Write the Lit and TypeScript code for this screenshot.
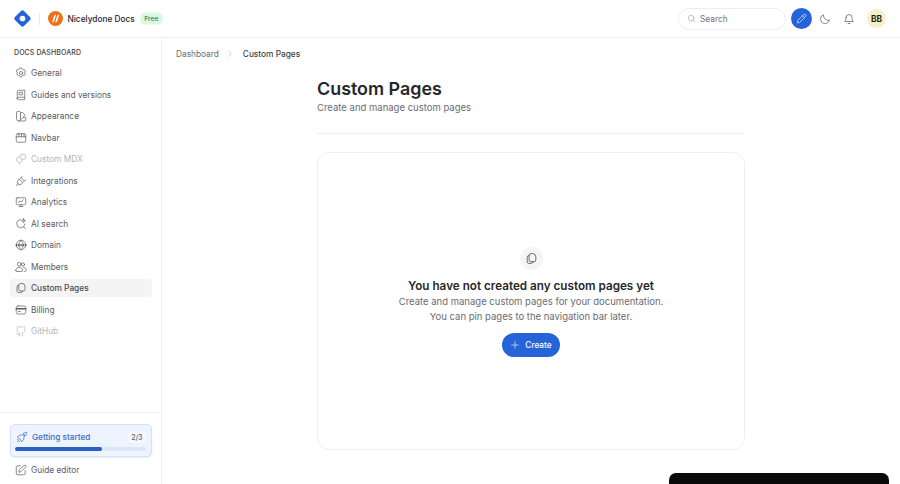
import { LitElement, html, css, svg } from "lit";
import { customElement } from "lit/decorators.js";

const ic = (body: unknown, cls = "ico") => html`<svg class=${cls} viewBox="0 0 24 24" fill="none" stroke="currentColor" stroke-width="1.6" stroke-linecap="round" stroke-linejoin="round">${body}</svg>`;

const icons: Record<string, unknown> = {
  gear: svg`<path d="M12 2l2 .5.8 2.300 1.600.9 2.400-.5 2 3-1.500 1.900v1.800l1.500 1.900-2 3-2.400-.5-1.600.9-.8 2.300-2 .5-2-.5-.8-2.300-1.600-.9-2.400.5-2-3 1.500-1.900v-1.800L2.200 8.200l2-3 2.400.5 1.600-.9.8-2.300z"/><circle cx="12" cy="12" r="3.200"/>`,
  book: svg`<path d="M4.500 19V5a2.500 2.500 0 0 1 2.500-2.500h12.500v19H7A2.500 2.500 0 0 1 4.500 19zm0 0A2.500 2.500 0 0 1 7 16.500h12.500"/><path d="M9 6.500h6v5H9z"/>`,
  palette: svg`<path d="M3 5a2 2 0 0 1 2-2h4a2 2 0 0 1 2 2v13a4 4 0 0 1-8 0z"/><path d="M11 7l3-3 6.500 6.500L11 20"/><path d="M8 22h12a1.500 1.500 0 0 0 1.500-1.500V16a1.500 1.500 0 0 0-1.500-1.500h-3"/>`,
  navbar: svg`<rect x="2.500" y="3.500" width="19" height="17" rx="3.500"/><path d="M2.500 9.500h19M8 3.500v6M13 3.500v6M18 3.500v6"/>`,
  mdx: svg`<rect x="11" y="2.500" width="10" height="10" rx="3"/><path d="M11 6L3.500 10v6l5.500 3.500 5.500-3.500v-3.500"/><path d="M9 19.500V22"/>`,
  plug: svg`<path d="M8.500 8.500l7 7-2.500 2.500a4.900 4.900 0 0 1-7-7z"/><path d="M6 18l-3.500 3.500M12.500 5.500l6 6"/><path d="M11 7l3-4M17 13l4-3"/>`,
  chart: svg`<rect x="2.500" y="3.500" width="19" height="14" rx="2.500"/><path d="M7 13l3-3 2 2 4.500-4.500M8.500 21h7M12 17.500V21"/>`,
  aisearch: svg`<path d="M11.500 3.500a8 8 0 1 0 8 8.500"/><path d="M16.500 17l4.500 4.500"/><path d="M17 1.500l1 2.900 2.900 1-2.900 1-1 2.900-1-2.900-2.900-1 2.900-1z"/>`,
  globe: svg`<circle cx="12" cy="12" r="9.500"/><path d="M12 2.500c-5.500 5-5.500 14 0 19 5.500-5 5.500-14 0-19z"/><path d="M1.500 12h21" stroke-width="4.500" stroke-dasharray="2.400 1.300" stroke-linecap="butt"/>`,
  users: svg`<circle cx="8.500" cy="6.500" r="3.800"/><circle cx="16" cy="7" r="3.200"/><path d="M1.500 19c0-3.500 3-6.500 7-6.500s7 3 7 6.500a2 2 0 0 1-2 2h-10a2 2 0 0 1-2-2z"/><path d="M17 12.500c3.200.1 5.500 3 5.500 6 0 1.500-1 2.500-3.500 2.500"/>`,
  pages: svg`<path d="M7.500 6.500A3.500 3.500 0 0 0 4 10v7.500A3.500 3.500 0 0 0 7.500 21h4a3.500 3.500 0 0 0 3.500-3"/><path d="M7.500 6.500A3.500 3.500 0 0 1 11 3h3a6 6 0 0 1 6 6v5.500a3.500 3.500 0 0 1-3.500 3.500H11a3.500 3.500 0 0 1-3.500-3.500z"/>`,
  card: svg`<rect x="2.500" y="4" width="19" height="16" rx="3.500"/><path d="M2.500 9.500h19" stroke-width="3"/><path d="M6.500 15h4"/>`,
  github: svg`<path d="M9 19.500c-4 1.300-4-2-6-2.500M15 22v-3.500a3 3 0 0 0-.9-2.400c3-.3 6-1.500 6-6.300a5 5 0 0 0-1.300-3.400 4.600 4.600 0 0 0-.1-3.400s-1.100-.3-3.600 1.300a12 12 0 0 0-6.200 0C6.400 2.700 5.300 3 5.300 3a4.600 4.600 0 0 0-.1 3.400A5 5 0 0 0 3.900 9.800c0 4.800 3 6 6 6.300a3 3 0 0 0-.9 2.400V22"/>`,
  rocket: svg`<path d="M6 14.500L3 12.500l3.500-4H11C14 4.500 17.500 2.500 21.500 2.500c0 4-2 7.500-6 10.500v4.500L11.500 21l-2-3"/><path d="M6 14.500l3.500 3.500"/><path d="M5.500 18.500l-3 3M3.500 16.500l-1 1M7.500 20.500l-1 1"/><circle cx="15.500" cy="8.500" r="1.500"/>`,
  edit: svg`<path d="M11 3.500H6A3.500 3.500 0 0 0 2.500 7v11A3.500 3.500 0 0 0 6 21.500h11a3.500 3.500 0 0 0 3.500-3.500v-5"/><path d="M18.500 2.500a2.300 2.300 0 0 1 3.200 3.200L12 15.500l-4.500 1 1-4.500z"/>`,
};

const nav: [string, string, boolean?, boolean?][] = [
  ["General", "gear"],
  ["Guides and versions", "book"],
  ["Appearance", "palette"],
  ["Navbar", "navbar"],
  ["Custom MDX", "mdx", true],
  ["Integrations", "plug"],
  ["Analytics", "chart"],
  ["AI search", "aisearch"],
  ["Domain", "globe"],
  ["Members", "users"],
  ["Custom Pages", "pages", false, true],
  ["Billing", "card"],
  ["GitHub", "github", true],
];

@customElement("app-root")
export class AppRoot extends LitElement {
  static styles = css`
    :host { display: block; height: 484px; overflow: hidden; position: relative; background: #fff; font-family: Inter, "Liberation Sans", sans-serif; color: #52525b; }
    .header { height: 38px; box-sizing: border-box; border-bottom: 1px solid #f0f0f1; display: flex; align-items: center; padding: 0 14px 0 14px; }
    .logo { width: 17px; height: 17px; display: block; }
    .sep { width: 1px; height: 12px; background: #e9e9eb; margin: 0 8px; }
    .brand { width: 15px; height: 15px; display: block; }
    .brand-name { font-size: 8.300px; font-weight: 500; color: #27272a; margin-left: 4.500px; }
    .free { font-size: 6.800px; font-weight: 500; color: #2f8f57; background: #dcf7e4; border: 1px solid #ecfaf0; border-radius: 5px; padding: 2px 3.500px; margin-left: 5px; line-height: 7px; }
    .spacer { flex: 1; }
    .search { width: 108px; height: 22px; box-sizing: border-box; border: 1px solid #efeff1; border-radius: 11px; display: flex; align-items: center; gap: 4px; padding-left: 8px; font-size: 8.300px; color: #71717a; }
    .search svg { width: 9px; height: 9px; color: #8b8b93; }
    .pen { width: 21px; height: 21px; border-radius: 50%; background: #2563d9; color: #fff; display: flex; align-items: center; justify-content: center; margin-left: 5px; }
    .pen svg { width: 11px; height: 11px; }
    .hbtn { width: 12px; height: 12px; color: #6b6b73; display: block; }
    .hbtn.moon { margin-left: 7px; }
    .hbtn.bell { margin-left: 12px; }
    .avatar { width: 19px; height: 19px; border-radius: 50%; background: #f5f1c7; color: #1c1c1f; font-size: 8.300px; font-weight: 700; display: flex; align-items: center; justify-content: center; margin-left: 12px; }
    .body { display: flex; height: 446px; }
    .side { width: 162px; box-sizing: border-box; border-right: 1px solid #f0f0f1; display: flex; flex-direction: column; flex-shrink: 0; overflow: hidden; }
    .side-top { flex: 1; padding: 10px 9.500px 0 10px; }
    .side-title { font-size: 7px; font-weight: 500; color: #3f3f46; padding-left: 4px; line-height: 10px; margin-bottom: 6px; letter-spacing: .1px; }
    .item { height: 18px; margin-bottom: 3.500px; display: flex; align-items: center; gap: 4px; padding-left: 5px; border-radius: 4px; font-size: 8.350px; color: #5b5b63; }
    .item.dis { color: #b4b4ba; }
    .item.on { background: #f4f4f5; color: #4a4a52; font-weight: 500; }
    .ico { width: 12px; height: 12px; flex-shrink: 0; stroke-width: 1.400; }
    .side-foot { border-top: 1px solid #f0f0f1; padding: 11px 9.500px 0 10px; height: 72px; box-sizing: border-box; flex-shrink: 0; }
    .gs { height: 33px; box-sizing: border-box; border: 1px solid #d4e0f3; border-radius: 5px; background: #eef4fd; box-shadow: 0 1px 2px rgba(30,60,120,.1); padding: 5.500px 5px 0 4px; }
    .gs-row { display: flex; align-items: center; gap: 4px; color: #3b6cc4; font-size: 8.200px; font-weight: 500; height: 13px; padding-left: 1px; }
    .gs-count { margin-left: auto; font-size: 7px; color: #52627c; background: #f6f8fc; border-radius: 3px; padding: 1px 3px; line-height: 9px; }
    .bar { height: 3.500px; background: #dbe7f8; border-radius: 2px; margin-top: 3.500px; }
    .fill { height: 100%; width: 67%; background: #2a5fc4; border-radius: 2px; }
    .foot-item { margin-top: 3.500px; margin-bottom: 0; height: 18px; }
    .main { flex: 1; min-width: 0; display: flex; flex-direction: column; }
    .crumbs { display: flex; align-items: center; padding: 9.500px 0 0 14px; font-size: 8.300px; height: 12px; color: #6b6b73; }
    .crumbs svg { width: 8px; height: 8px; color: #a1a1aa; margin: 0 9px 0 7px; }
    .crumbs b { font-weight: 500; color: #3f3f46; }
    .content { width: 428px; margin-left: 155px; }
    h1 { margin: 16.500px 0 0; font-size: 17.900px; line-height: 26px; font-weight: 600; color: #27272a; letter-spacing: 0; }
    .sub { font-size: 9.500px; line-height: 13px; color: #6b6b73; margin-top: -1px; }
    hr { border: 0; border-top: 1px solid #ececee; margin: 19px 0 18px; }
    .card { height: 298px; box-sizing: border-box; border: 1px solid #efeff1; border-radius: 12px; display: flex; flex-direction: column; align-items: center; padding-top: 94px; }
    .disc { width: 23px; height: 23px; border-radius: 50%; background: #f5f5f6; display: flex; align-items: center; justify-content: center; color: #3f3f46; }
    .disc svg { width: 13px; height: 13px; }
    h2 { margin: 8px 0 0; font-size: 11.700px; line-height: 17px; font-weight: 600; color: #27272a; }
    .desc { font-size: 9.500px; line-height: 14.500px; text-align: center; color: #6b6b73; margin-top: 0; }
    .create { margin-top: 9px; width: 58px; height: 24px; border-radius: 12px; background: #2563d9; color: #fff; display: flex; align-items: center; justify-content: center; gap: 5px; font-size: 8.250px; font-weight: 500; }
    .create svg { width: 10px; height: 10px; }
    .toast { position: absolute; left: 669px; top: 473px; width: 220px; height: 30px; background: #0a0a0a; border-radius: 7px; }
  `;

  render() {
    return html`
      <div class="header">
        <svg class="logo" viewBox="0 0 24 24"><path d="M12 .5a3 3 0 0 1 2.100.9l8.500 8.500a3 3 0 0 1 0 4.200l-8.500 8.500a3 3 0 0 1-4.200 0l-8.500-8.500a3 3 0 0 1 0-4.200l8.500-8.500A3 3 0 0 1 12 .5z" fill="#2563d9"/><circle cx="12" cy="12" r="4" fill="#fff"/></svg>
        <span class="sep"></span>
        <svg class="brand" viewBox="0 0 24 24"><circle cx="12" cy="12" r="12" fill="#ee6f1c"/><path d="M6.500 18l3-9.500c.5-1.500 1.500-2.500 3.500-2.500l-3 9.500c-.5 1.500-1.500 2.500-3.500 2.500zM11.500 18l3-9.500c.5-1.500 1.500-2.500 3.500-2.500l-3 9.500c-.5 1.500-1.500 2.500-3.500 2.500z" fill="#fff"/></svg>
        <span class="brand-name">Nicelydone Docs</span>
        <span class="free">Free</span>
        <span class="spacer"></span>
        <div class="search">${ic(svg`<circle cx="11" cy="11" r="7.500"/><path d="M17 17l4.500 4.500"/>`)}<span>Search</span></div>
        <div class="pen">${ic(svg`<path d="M17 3.500a2.800 2.800 0 0 1 4 4L8 20.500l-5 1 1-5z"/><path d="M14.500 6l4 4"/>`)}</div>
        ${ic(svg`<path d="M20.500 14.500A9 9 0 0 1 9.500 3.500a9 9 0 1 0 11 11z"/>`, "hbtn moon")}
        ${ic(svg`<path d="M6 9a6 6 0 0 1 12 0c0 5 1.500 7 2.500 8h-17C4.500 16 6 14 6 9z"/><path d="M10 21h4"/>`, "hbtn bell")}
        <div class="avatar">BB</div>
      </div>
      <div class="body">
        <aside class="side">
          <div class="side-top">
            <div class="side-title">DOCS DASHBOARD</div>
            ${nav.map(([label, icon, dis, on]) => html`<div class="item ${dis ? "dis" : ""} ${on ? "on" : ""}">${ic(icons[icon])}<span>${label}</span></div>`)}
          </div>
          <div class="side-foot">
            <div class="gs">
              <div class="gs-row">${ic(icons.rocket)}<span>Getting started</span><span class="gs-count">2/3</span></div>
              <div class="bar"><div class="fill"></div></div>
            </div>
            <div class="item foot-item">${ic(icons.edit)}<span>Guide editor</span></div>
          </div>
        </aside>
        <main class="main">
          <div class="crumbs"><span>Dashboard</span>${ic(svg`<path d="M8 4l8 8-8 8"/>`)}<b>Custom Pages</b></div>
          <div class="content">
            <h1>Custom Pages</h1>
            <div class="sub">Create and manage custom pages</div>
            <hr />
            <section class="card">
              <div class="disc">${ic(icons.pages)}</div>
              <h2>You have not created any custom pages yet</h2>
              <div class="desc">Create and manage custom pages for your documentation.<br />You can pin pages to the navigation bar later.</div>
              <div class="create">${ic(svg`<path d="M12 4v16M4 12h16"/>`)}<span>Create</span></div>
            </section>
          </div>
        </main>
      </div>
      <div class="toast"></div>
    `;
  }
}
